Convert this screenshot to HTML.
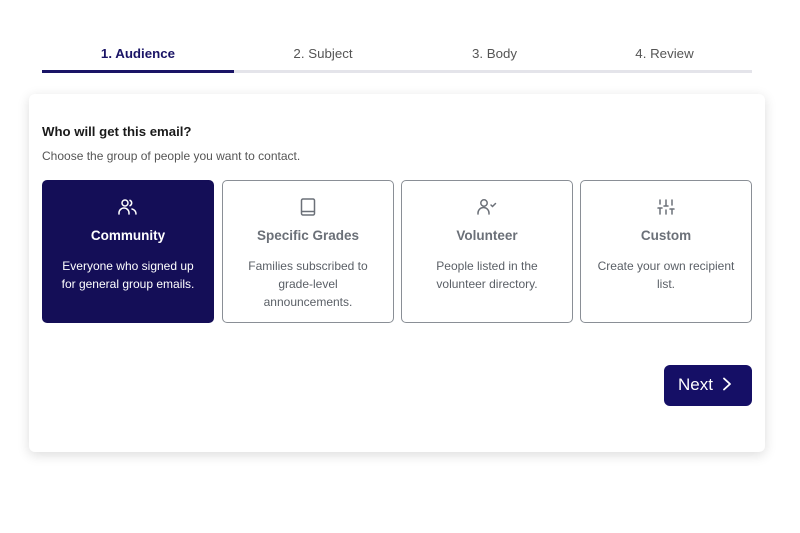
<!DOCTYPE html>
<html><head><meta charset="utf-8"><style>
*{margin:0;padding:0;box-sizing:border-box}
body{width:800px;height:533px;background:#fff;font-family:"Liberation Sans",Arial,sans-serif;position:relative;overflow:hidden}
.tab{position:absolute;top:46px;font-size:13.3px;color:#555;text-align:center}
.line{position:absolute;top:70px;left:42px;width:710px;height:3px;background:#e4e4ea}
.active{position:absolute;top:70px;left:42px;width:192px;height:3px;background:#1a1466}
.card{position:absolute;left:29px;top:94px;width:736px;height:358px;background:#fff;border-radius:6px;box-shadow:0 3px 12px rgba(0,0,0,.14)}
h2{position:absolute;left:42px;top:124px;font-size:13.2px;color:#1a1a1a;font-weight:bold}
.sub{position:absolute;left:42px;top:149px;font-size:12px;color:#555}
.opt{position:absolute;top:180px;width:172px;height:143px;border:1px solid #8a8f96;border-radius:5px;text-align:center;color:#6b7078}
.opt.sel{background:#140e57;border-color:#140e57;color:#fff}
.opt svg{position:absolute;left:50%;top:15px;margin-left:-11px}
.opt .t{position:absolute;top:47px;left:0;right:0;font-size:13.5px;font-weight:bold}
.opt .d{position:absolute;top:76px;left:10px;right:10px;font-size:12px;line-height:18px}
.opt.sel .d{left:16px;right:16px}
.opt.sel .t,.opt.sel .d{color:#fff}
.opt .d{color:#5a5f66}
.btn{position:absolute;left:664px;top:365px;width:88px;height:41px;background:#150f66;border-radius:6px;color:#fff;font-size:17px;line-height:40px;padding-left:14px}
</style></head><body>
<div class="tab" style="left:42px;width:192px;color:#1a1466;font-weight:bold">1. Audience</div>
<div class="tab" style="left:234px;width:178px">2. Subject</div>
<div class="tab" style="left:412px;width:165px">3. Body</div>
<div class="tab" style="left:577px;width:175px">4. Review</div>
<div class="line"></div><div class="active"></div>
<div class="card"></div>
<h2>Who will get this email?</h2>
<div class="sub">Choose the group of people you want to contact.</div>

<div class="opt sel" style="left:42px">
<svg width="22" height="22" viewBox="0 0 22 22" fill="none" stroke="#fff" stroke-width="1.5" stroke-linecap="round"><circle cx="8" cy="7" r="3"/><path d="M2 18v-1a5 5 0 0 1 10 0v1"/><path d="M13 4.3a3 3 0 0 1 0 5.4"/><path d="M15 13a5 5 0 0 1 4 5"/></svg>
<div class="t">Community</div><div class="d">Everyone who signed up for general group emails.</div></div>

<div class="opt" style="left:222px">
<svg width="22" height="22" viewBox="0 0 22 22" fill="none" stroke="#6b7078" stroke-width="1.5" stroke-linejoin="round"><rect x="4.5" y="3" width="13" height="16" rx="1.5"/><path d="M4.5 15.5h13"/></svg>
<div class="t">Specific Grades</div><div class="d">Families subscribed to grade-level announcements.</div></div>

<div class="opt" style="left:401px">
<svg width="22" height="22" viewBox="0 0 22 22" fill="none" stroke="#6b7078" stroke-width="1.5" stroke-linecap="round"><circle cx="8" cy="7" r="3.2"/><path d="M2 18v-1a5.5 5.5 0 0 1 11 0v1"/><path d="M15 9l1.5 1.5 3-3"/></svg>
<div class="t">Volunteer</div><div class="d">People listed in the volunteer directory.</div></div>

<div class="opt" style="left:580px">
<svg width="22" height="22" viewBox="0 0 22 22" fill="none" stroke="#6b7078" stroke-width="1.5" stroke-linecap="round"><path d="M5 4v4M5 12v6M3 12h4M11 4v6M11 14v4M9 10h4M17 4v5M17 13v5M15 13h4"/></svg>
<div class="t">Custom</div><div class="d">Create your own recipient list.</div></div>

<div class="btn">Next <svg width="12" height="14" viewBox="0 0 12 14" style="vertical-align:-1px;margin-left:3px" fill="none" stroke="#fff" stroke-width="1.8" stroke-linecap="round" stroke-linejoin="round"><path d="M3 1.5l6 5.5-6 5.5"/></svg></div>
</body></html>
